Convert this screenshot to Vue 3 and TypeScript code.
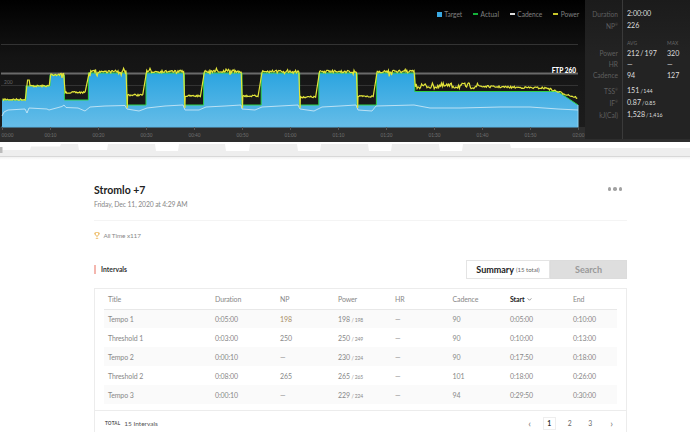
<script setup lang="ts">
const X = (m: number) => 2 + m * 4.8
const axis = Array.from({ length: 13 }, (_, i) => {
  const m = i * 10
  const hh = String(Math.floor(m / 60)).padStart(2, '0')
  const mm = String(m % 60).padStart(2, '0')
  return { x: X(m), label: `${hh}:${mm}` }
})

// Target profile: [start minute, end minute, y]
const steps: [number, number, number][] = [
  [0, 5, 100], [5, 10, 86], [10, 13, 75], [13, 18, 100], [18, 26, 73], [26, 30, 105],
  [30, 38, 73], [38, 42, 105], [42, 50, 73], [50, 54, 105], [54, 62, 73], [62, 66, 105],
  [66, 74, 73], [74, 78, 105], [78, 86, 73], [86, 115.8, 91.5]
]
const tgt: string[] = []
steps.forEach(([a, b, y]) => { tgt.push(`${X(a)},${y}`, `${X(b)},${y}`) })
tgt.push(`${X(120)},105`)
const targetTop = tgt.join(' ')
const targetArea = `${X(0)},127 ${targetTop} ${X(120)},127`

let seed = 7
const rnd = () => { seed = (seed * 16807) % 2147483647; return seed / 2147483647 }

const lowY: [number, number, number][] = [
  [0, 5, 99.5], [5, 10, 86], [10, 13, 74.5], [13, 18, 92.5], [18, 26, 71.5], [26, 30, 95],
  [30, 38, 71.5], [38, 42, 96], [42, 50, 71.5], [50, 54, 96], [54, 62, 71.5], [62, 66, 97],
  [66, 74, 71.5], [74, 78, 96.5], [78, 86, 71.5]
]
const pw: string[] = []
lowY.forEach(([a, b, y]) => {
  const hi = y < 75
  const low = a >= 26 && y > 90
  if (low) pw.push(`${X(a) + 0.5},108`)
  const end = low || a === 13 ? X(b) - 2.5 : X(b) - 0.3
  for (let x = X(a) + 0.8; x < end; x += 0.8) {
    let v = y + (rnd() - 0.5) * (hi ? 2.6 : 1.8)
    if (hi && rnd() < 0.14) v += (rnd() - 0.4) * 7
    if (a === 5 && x > 27 && x < 29.5) v = 80
    pw.push(`${x.toFixed(1)},${v.toFixed(1)}`)
  }
})
for (let x = X(86) + 0.5; x <= X(120); x += 0.9) {
  const m = (x - 2) / 4.8
  let base = 86
  if (m > 100) base = 86.5 + (m - 100) * 0.12
  if (m > 114) base = 89 + (m - 114) * 1.5
  const amp = m < 100 ? 6 : 2
  pw.push(`${x.toFixed(1)},${(base + (rnd() - 0.5) * amp).toFixed(1)}`)
}
const power = pw.join(' ')

const cadence = [
  [2, 116], [4, 112], [8, 110], [25, 109], [27, 113], [29, 108], [47, 109], [49, 110], [62, 106.5],
  [64, 105], [66, 107.5], [78, 108], [85, 111], [90, 107], [105, 106], [125, 105.5], [127, 109],
  [139, 111], [147, 108], [165, 106], [183, 105], [185, 110], [199, 110], [206, 107], [225, 106],
  [241, 105], [242, 109], [255, 110], [262, 107], [298, 105], [300, 109], [314, 111], [322, 107],
  [340, 106], [356, 105], [358, 110], [372, 111], [376, 106], [414, 105], [430, 108], [460, 108],
  [500, 107], [530, 107], [558, 109], [578, 110]
].map((p) => p.join(',')).join(' ')

const mini = '0,157 0,150 30,150 31,146.5 60,146.5 61,144 78,144 79,150 107,150 108,144 155,144 156,151 178,151 179,144 225,144 226,151 249,151 250,144 297,144 298,151 320,151 321,144 368,144 369,151 391,151 392,144 439,144 440,151 462,151 463,144 510,144 511,148 690,148 690,157'

const legend = [
  { label: 'Target', c: 'sq' }, { label: 'Actual', c: 'gr' }, { label: 'Cadence', c: 'wh' }, { label: 'Power', c: 'ye' }
]

const rows = [
  { t: 'Tempo 1', d: '0:05:00', np: '198', pa: '198', pb: '198', cad: '90', s: '0:05:00', e: '0:10:00', warm: true },
  { t: 'Threshold 1', d: '0:03:00', np: '250', pa: '250', pb: '249', cad: '90', s: '0:10:00', e: '0:13:00', warm: false },
  { t: 'Tempo 2', d: '0:00:10', np: '—', pa: '230', pb: '224', cad: '90', s: '0:17:50', e: '0:18:00', warm: false },
  { t: 'Threshold 2', d: '0:08:00', np: '265', pa: '265', pb: '265', cad: '101', s: '0:18:00', e: '0:26:00', warm: false },
  { t: 'Tempo 3', d: '0:00:10', np: '—', pa: '229', pb: '224', cad: '94', s: '0:29:50', e: '0:30:00', warm: false }
]
</script>

<template>
  <div class="page">
    <section class="top">
      <div class="chart">
        <svg width="585" height="140" viewBox="0 0 585 140">
          <defs>
            <linearGradient id="bg" x1="0" y1="0" x2="0" y2="1">
              <stop offset="0" stop-color="#000" />
              <stop offset="0.45" stop-color="#141414" />
              <stop offset="1" stop-color="#1c1c1c" />
            </linearGradient>
            <linearGradient id="blue" gradientUnits="userSpaceOnUse" x1="0" y1="73" x2="0" y2="127">
              <stop offset="0" stop-color="#2ba4e0" />
              <stop offset="1" stop-color="#66bde8" />
            </linearGradient>
          </defs>
          <rect width="585" height="127" fill="url(#bg)" />
          <rect y="127" width="585" height="13" fill="#2d2d2d" />
          <line x1="1" x2="578" y1="44.5" y2="44.5" stroke="#333" />
          <line x1="1" x2="578" y1="85.5" y2="85.5" stroke="#333" />
          <line x1="1" x2="578" y1="73.5" y2="73.5" stroke="#6a6a6a" stroke-width="2" />
          <polygon :points="targetArea" fill="url(#blue)" />
          <polyline :points="targetTop" fill="none" stroke="#2fd24a" stroke-width="1" />
          <line x1="1.5" x2="578" y1="127" y2="127" stroke="#5ab6e6" stroke-width="1" />
          <line x1="578" x2="578" y1="105" y2="127" stroke="#8fd3f0" stroke-width="1" />
          <polyline :points="cadence" fill="none" stroke="#d5ecf7" stroke-width="0.8" />
          <polyline :points="power" fill="none" stroke="#e2e43a" stroke-width="1.2" />
          <text x="4" y="83.500" class="ylab">200</text>
          <text x="576" y="72.500" class="ftp" text-anchor="end">FTP 260</text>
          <g v-for="a in axis" :key="a.label">
            <line :x1="a.x + 0.5" :x2="a.x + 0.5" y1="127" y2="130" stroke="#555" />
            <text :x="a.x + 0.5 + (a.label === '00:00' ? 5 : 0)" y="137" class="xlab" text-anchor="middle">{{ a.label }}</text>
          </g>
        </svg>
        <ul class="legend">
          <li v-for="l in legend" :key="l.label"><i :class="l.c"></i>{{ l.label }}</li>
        </ul>
      </div>
      <aside class="stats">
        <div class="col labels">
          <p>Duration</p>
          <p>NP<sup>®</sup></p>
          <p class="hd"></p>
          <p class="r">Power</p>
          <p class="r">HR</p>
          <p class="r">Cadence</p>
          <p class="s first">TSS<sup>®</sup></p>
          <p class="s">IF<sup>®</sup></p>
          <p class="s">kJ(Cal)</p>
        </div>
        <div class="col vals">
          <p>2:00:00</p>
          <p>226</p>
          <p class="hd"><span class="avg">AVG</span><span>MAX</span></p>
          <p class="r"><span class="avg">212 / 197</span><span>320</span></p>
          <p class="r"><span class="avg">—</span><span>—</span></p>
          <p class="r"><span class="avg">94</span><span>127</span></p>
          <p class="s first">151 <small>/ 144</small></p>
          <p class="s">0.87 <small>/ 0.85</small></p>
          <p class="s">1,528 <small>/ 1,416</small></p>
        </div>
      </aside>
    </section>

    <div class="strip"></div>
    <svg class="mini" width="690" height="15" viewBox="0 142 690 15">
      <rect x="0" y="142" width="690" height="15" fill="#fff" />
      <polygon :points="mini" fill="#eee" />
      <rect x="0" y="147" width="2.5" height="6" fill="#bbb" />
      <line x1="0" x2="690" y1="156.5" y2="156.5" stroke="#d8d8d8" />
    </svg>
    <div class="shade"></div>

    <main class="content">
      <header class="head">
        <div>
          <h1>Stromlo +7</h1>
          <p class="date">Friday, Dec 11, 2020 at 4:29 AM</p>
        </div>
        <div class="dots"><i></i><i></i><i></i></div>
      </header>

      <div class="award">
        <svg width="6" height="7" viewBox="0 0 12 14" fill="none" stroke="#eebb66" stroke-width="1.6">
          <path d="M3 1h6v4a3 3 0 0 1-6 0z" />
          <path d="M3 2H1v1a2.500 2.500 0 0 0 2.500 2.500M9 2h2v1a2.500 2.500 0 0 1-2.500 2.500M6 8v3M3.500 13h5" />
        </svg>
        <span>All Time x117</span>
      </div>

      <div class="bar">
        <h2>Intervals</h2>
        <div class="tabs">
          <div class="tab on"><b>Summary</b> <small>(15 total)</small></div>
          <div class="tab off">Search</div>
        </div>
      </div>

      <div class="box">
        <div class="inner">
          <table>
            <colgroup>
              <col class="c1" /><col class="c2" /><col class="c3" /><col class="c4" />
              <col class="c5" /><col class="c6" /><col class="c7" /><col class="c8" />
            </colgroup>
            <thead>
              <tr>
                <th>Title</th><th>Duration</th><th>NP</th><th>Power</th><th>HR</th><th>Cadence</th>
                <th class="sorted">Start
                  <svg width="5" height="3" viewBox="0 0 6 4" fill="none" stroke="#777"><path d="M.5.500 3 3l2.500-2.500" /></svg>
                </th>
                <th>End</th>
              </tr>
            </thead>
            <tbody>
              <tr v-for="r in rows" :key="r.t">
                <td>{{ r.t }}</td>
                <td>{{ r.d }}</td>
                <td :class="{ warm: r.warm }">{{ r.np }}</td>
                <td>{{ r.pa }} <small>/ {{ r.pb }}</small></td>
                <td>—</td>
                <td>{{ r.cad }}</td>
                <td>{{ r.s }}</td>
                <td>{{ r.e }}</td>
              </tr>
            </tbody>
          </table>
        </div>
        <footer class="foot">
          <div class="total"><small>TOTAL</small> <span>15 Intervals</span></div>
          <nav class="pager">
            <span class="arrow prev">‹</span>
            <span class="num cur">1</span>
            <span class="num">2</span>
            <span class="num">3</span>
            <span class="arrow next">›</span>
          </nav>
        </footer>
      </div>
    </main>
  </div>
</template>

<style>
html, body { margin: 0; overflow: hidden; background: #fff; }
</style>

<style scoped>
.page {
  width: 690px;
  height: 432px;
  overflow: hidden;
  font-family: Lato, "Open Sans", sans-serif;
  color: #777;
  background: #fff;
}
p, h1, h2, ul { margin: 0; padding: 0; }
.top { display: flex; height: 140px; background: #2d2d2d; }
.chart { position: relative; width: 585px; height: 140px; }
.chart svg { display: block; }
.ylab { font-size: 5px; fill: #666; }
.xlab { font-size: 4.7px; fill: #707070; }
.ftp { font-size: 6.5px; font-weight: 900; fill: #fff; }
.legend {
  position: absolute;
  top: 10px;
  left: 437px;
  display: flex;
  gap: 11px;
  list-style: none;
  font-size: 6.6px;
  line-height: 8px;
  color: #808080;
}
.legend li { display: flex; align-items: center; gap: 2.3px; }
.legend i { display: block; width: 5px; }
.legend .sq { height: 5px; background: #3aa9e3; }
.legend .gr { height: 1.5px; background: #14b33a; }
.legend .wh { height: 1.5px; background: #ddd; }
.legend .ye { height: 1.5px; background: #c9c72a; }

.stats { display: flex; width: 105px; height: 139px; background: linear-gradient(#1b1b1b, #232323 40%); font-size: 7.1px; }
.col { padding-top: 7.5px; box-sizing: border-box; }
.col p { height: 12.5px; line-height: 12.5px; white-space: nowrap; word-spacing: -0.8px; }
.col .hd { height: 9px; margin-top: 6px; line-height: 9px; font-size: 5px; color: #666; }
.col .r { height: 11.2px; line-height: 11.2px; }
.col .s { height: 12px; line-height: 12px; }
.col .first { margin-top: 3.5px; }
.labels { width: 38px; padding-right: 4px; border-right: 1px solid #3a3a3a; text-align: right; color: #5f5f5f; font-size: 6.6px; }
.vals { flex: 1; padding-left: 4px; color: #ddd; }
.vals .avg { display: inline-block; width: 40px; }
sup { font-size: 3.5px; line-height: 0; vertical-align: 3px; }
small { font-size: 0.75em; }

.strip { height: 2px; background: #2d2d2d; }
.mini { display: block; }
.shade { height: 3px; background: linear-gradient(#f2f2f2, #fff); }

.content { padding: 0 63px 0 94px; }
.head { display: flex; justify-content: space-between; align-items: flex-start; height: 61px; padding-top: 23px; box-sizing: border-box; border-bottom: 1px solid #f4f4f4; }
h1 { font-size: 10.5px; line-height: 14px; font-weight: 700; color: #222; }
.date { margin-top: 2px; font-size: 6.8px; letter-spacing: -0.12px; line-height: 10px; color: #888; }
.dots { display: flex; gap: 2px; margin: 4px 5px 0 0; }
.dots i { width: 3.500px; height: 3.500px; border-radius: 50%; background: #a2a2a2; }
.award { display: flex; align-items: center; gap: 3.500px; margin-top: 9px; height: 10px; font-size: 6.4px; letter-spacing: -0.1px; color: #888; }
.bar { display: flex; justify-content: space-between; align-items: center; margin-top: 20px; height: 19px; }
h2 { padding-left: 5px; border-left: 2px solid #f4b6ae; font-size: 6.8px; line-height: 9px; font-weight: 700; color: #333; }
.tabs { display: flex; height: 19px; }
.tab { box-sizing: border-box; display: flex; align-items: center; justify-content: center; font-size: 9px; }
.on { width: 84px; gap: 2px; background: #fff; border: 1px solid #e4e4e4; color: #222; }
.on b { font-weight: 700; }
.on small { font-size: 6px; color: #666; }
.off { width: 77px; background: #dedede; border: 1px solid #dcdcdc; color: #999; font-weight: 700; }

.box { margin-top: 9px; width: 533px; box-sizing: border-box; border: 1px solid #ececec; }
.inner { padding: 0 9px; }
table { width: 513px; border-collapse: collapse; table-layout: fixed; font-size: 7px; letter-spacing: -0.12px; color: #888; }
.c1 { width: 107px; } .c2 { width: 65px; } .c3 { width: 58px; } .c4 { width: 57px; }
.c5 { width: 57.5px; } .c6 { width: 57.5px; } .c7 { width: 63px; } .c8 { width: 48px; }
th { height: 20px; padding: 0 0 0 4px; box-sizing: border-box; text-align: left; font-weight: 400; color: #888; border-bottom: 1px solid #e8e8e8; }
th.sorted { color: #222; font-weight: 700; }
th svg { vertical-align: middle; margin-left: 1px; }
td { height: 19px; padding: 0 0 0 4px; box-sizing: border-box; }
td small { font-size: 5px; }
tbody tr:nth-child(odd) { background: #fafafa; }
td.warm { color: #a98e66; }
.foot { display: flex; justify-content: space-between; align-items: center; height: 24px; margin-top: 6px; padding: 0 13px 0 10px; border-top: 1px solid #ececec; }
.total { font-size: 6.5px; color: #555; display: flex; align-items: center; gap: 4px; }
.total small { font-size: 4.6px; font-weight: 700; letter-spacing: 0.2px; }
.pager { display: flex; align-items: center; font-size: 6.8px; color: #666; }
.num { width: 13px; height: 13px; line-height: 13px; text-align: center; margin-left: 7.500px; box-sizing: border-box; }
.cur { border: 1px solid #eee; line-height: 11px; color: #333; font-weight: 700; }
.arrow { font-size: 10px; line-height: 13px; margin-left: 12px; color: #777; }
.prev { margin-right: 4px; }
.next { margin-left: 13.5px; }
</style>
